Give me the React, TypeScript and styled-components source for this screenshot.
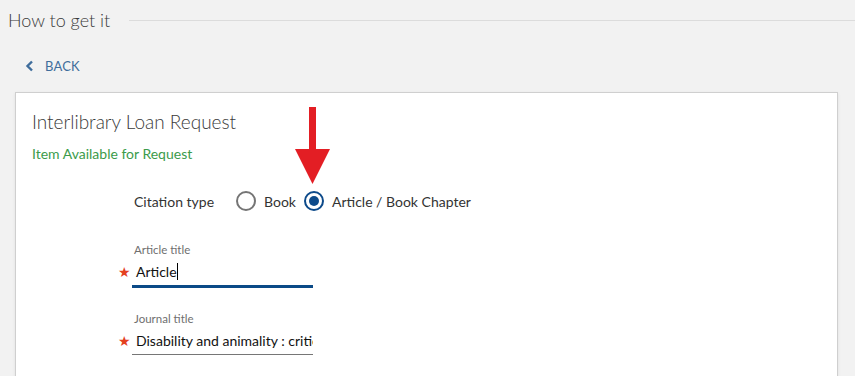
import React from "react";
import styled, { createGlobalStyle } from "styled-components";

const Global = createGlobalStyle`
  html, body { margin: 0; padding: 0; background: #f2f2f2; }
  body { font-family: "Lato", "Open Sans", sans-serif; color: #333; }
`;

const Page = styled.div`
  position: relative;
  width: 855px;
  height: 376px;
  overflow: hidden;
  background: #f2f2f2;
`;

const Header = styled.div`
  display: flex;
  align-items: center;
  height: 40px;
  padding-left: 8px;
  gap: 19px;
`;

const HeaderTitle = styled.h2`
  margin: 0;
  font-size: 18px;
  font-weight: 300;
  color: #3a3a3a;
  white-space: nowrap;
`;

const Rule = styled.div`
  flex: 1;
  height: 1px;
  background: #dcdcdc;
`;

const BackRow = styled.div`
  display: flex;
  align-items: center;
  height: 52px;
  padding-left: 25px;
  gap: 11px;
  color: #3f6d9c;
  font-size: 13px;
  letter-spacing: 0.2px;
`;

const Card = styled.section`
  margin-left: 15px;
  width: 823px;
  height: 300px;
  background: #fff;
  border: 1px solid #cfcfcf;
  box-shadow: 0 1px 3px rgba(0, 0, 0, 0.08);
  padding: 18px 16px 0;
  box-sizing: border-box;
`;

const CardTitle = styled.h3`
  margin: 0;
  font-size: 19px;
  font-weight: 300;
  color: #3a3a3a;
  line-height: 22px;
`;

const Available = styled.div`
  margin-top: 12px;
  font-size: 14px;
  color: #3b9b4b;
`;

const Form = styled.div`
  margin-left: 86px;
  margin-top: 27px;
  display: flex;
  flex-direction: column;
`;

const CitationRow = styled.div`
  display: flex;
  align-items: center;
  gap: 8px;
  padding-left: 16px;
  font-size: 14px;
  color: #333;
  height: 24px;
`;

const CitationLabel = styled.span`
  margin-right: 14px;
`;

const Radio = styled.span<{ $checked?: boolean }>`
  box-sizing: border-box;
  width: 20px;
  height: 20px;
  border-radius: 50%;
  border: 2px solid ${(p) => (p.$checked ? "#0d4a8a" : "#757575")};
  display: inline-flex;
  align-items: center;
  justify-content: center;
  &::after {
    content: "";
    width: 10px;
    height: 10px;
    border-radius: 50%;
    background: ${(p) => (p.$checked ? "#0d4a8a" : "transparent")};
  }
`;

const Field = styled.div<{ $gap: number }>`
  display: flex;
  align-items: flex-end;
  margin-top: ${(p) => p.$gap}px;
`;

const Star = styled.span`
  width: 14px;
  color: #e4401f;
  font-size: 14px;
  margin-bottom: 8px;
`;

const FieldBody = styled.div<{ $active?: boolean }>`
  width: 181px;
  display: flex;
  flex-direction: column;
  border-bottom: ${(p) => (p.$active ? "3px solid #0b4a87" : "1px solid #767676")};
  margin-bottom: ${(p) => (p.$active ? "0" : "2px")};
`;

const FieldLabel = styled.label`
  font-size: 11.5px;
  color: #6f6f6f;
  padding-left: 2px;
  line-height: 14px;
`;

const ValueBox = styled.div`
  display: flex;
  align-items: center;
  padding: 6px 0 5px 4px;
  height: 17px;
`;

const FieldValue = styled.span`
  font-size: 14px;
  color: #111;
  line-height: 17px;
  white-space: nowrap;
`;

const FieldInput = styled.input`
  border: 0;
  outline: none;
  padding: 0;
  margin: 0;
  width: 100%;
  background: transparent;
  font-family: inherit;
  font-size: 14px;
  color: #111;
  line-height: 17px;
  height: 17px;
`;

const Caret = styled.span`
  display: inline-block;
  width: 1px;
  height: 17px;
  background: #000;
`;

const Arrow = styled.svg`
  position: absolute;
  left: 294px;
  top: 107px;
`;

export default function App() {
  return (
    <Page>
      <Global />
      <Header>
        <HeaderTitle>How to get it</HeaderTitle>
        <Rule />
      </Header>
      <BackRow>
        <svg width="9" height="12" viewBox="0 0 9 12">
          <path d="M7 1.5 L2.5 6 L7 10.5" fill="none" stroke="#3f6d9c" strokeWidth="2.4" />
        </svg>
        <span>BACK</span>
      </BackRow>
      <Card>
        <CardTitle>Interlibrary Loan Request</CardTitle>
        <Available>Item Available for Request</Available>
        <Form>
          <CitationRow>
            <CitationLabel>Citation type</CitationLabel>
            <Radio />
            <span>Book</span>
            <Radio $checked />
            <span>Article / Book Chapter</span>
          </CitationRow>
          <Field $gap={30}>
            <Star>★</Star>
            <FieldBody $active>
              <FieldLabel>Article title</FieldLabel>
              <ValueBox>
                <FieldValue>Article</FieldValue>
                <Caret />
              </ValueBox>
            </FieldBody>
          </Field>
          <Field $gap={24}>
            <Star>★</Star>
            <FieldBody>
              <FieldLabel>Journal title</FieldLabel>
              <ValueBox>
                <FieldInput readOnly value="Disability and animality : critical perspectives" />
              </ValueBox>
            </FieldBody>
          </Field>
        </Form>
      </Card>
      <Arrow width="38" height="78" viewBox="0 0 38 78">
        <rect x="15" y="0" width="7" height="44" fill="#e31e24" />
        <polygon points="1,42 36,42 18.5,77" fill="#e31e24" />
      </Arrow>
    </Page>
  );
}
